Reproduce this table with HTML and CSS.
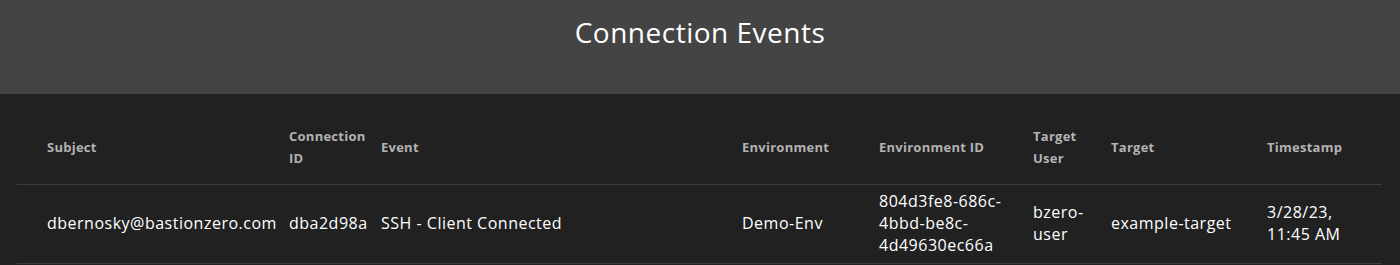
FILE: index.html
```html
<!DOCTYPE html>
<html lang="en">
<head>
<meta charset="utf-8">
<title>Connection Events</title>
<link rel="stylesheet" href="styles.css">
</head>
<body>
<header class="page-header">
  <h1 class="page-title">Connection Events</h1>
</header>
<main class="content">
  <table class="events">
    <colgroup>
      <col class="c-subject">
      <col class="c-conn">
      <col class="c-event">
      <col class="c-env">
      <col class="c-envid">
      <col class="c-tuser">
      <col class="c-target">
      <col class="c-time">
    </colgroup>
    <thead>
      <tr>
        <th>Subject</th>
        <th>Connection ID</th>
        <th>Event</th>
        <th>Environment</th>
        <th>Environment ID</th>
        <th>Target User</th>
        <th>Target</th>
        <th>Timestamp</th>
      </tr>
    </thead>
    <tbody>
      <tr>
        <td>dbernosky@bastionzero.com</td>
        <td>dba2d98a</td>
        <td>SSH - Client Connected</td>
        <td>Demo-Env</td>
        <td>804d3fe8-686c-4bbd-be8c-4d49630ec66a</td>
        <td>bzero-user</td>
        <td>example-target</td>
        <td>3/28/23, 11:45 AM</td>
      </tr>
    </tbody>
  </table>
</main>
</body>
</html>
```
FILE: styles.css
```css
html, body {
  margin: 0;
  padding: 0;
  background: #212121;
  font-family: "Open Sans", "Noto Sans", sans-serif;
  color: #ffffff;
}

.page-header {
  height: 94px;
  background: #444444;
  display: flex;
  justify-content: center;
}

.page-title {
  margin: 0;
  padding-top: 12px;
  font-size: 28px;
  font-weight: 400;
  letter-spacing: 0.5px;
  line-height: 40px;
  color: #ffffff;
}

.content {
  padding: 17px 18px 0 17px;
}

.events {
  width: 100%;
  border-collapse: collapse;
  table-layout: fixed;
}

.c-subject { width: 272px; }
.c-conn { width: 92px; }
.c-event { width: 361px; }
.c-env { width: 137px; }
.c-envid { width: 154px; }
.c-tuser { width: 78px; }
.c-target { width: 156px; }
.c-time { width: auto; }

.events th,
.events td {
  text-align: left;
  vertical-align: middle;
  padding: 0 10px 0 0;
  border-bottom: 1px solid #3c3c3c;
}

.events th:first-child,
.events td:first-child {
  padding-left: 30px;
}

.events th {
  height: 72px;
  padding-bottom: 1px;
  font-size: 13px;
  font-weight: 700;
  letter-spacing: 0.25px;
  line-height: 22px;
  color: #b3b3b3;
}

.events td {
  height: 76px;
  padding-bottom: 2px;
  font-size: 16px;
  font-weight: 500;
  letter-spacing: 0.5px;
  line-height: 22px;
  color: #ffffff;
}
```
